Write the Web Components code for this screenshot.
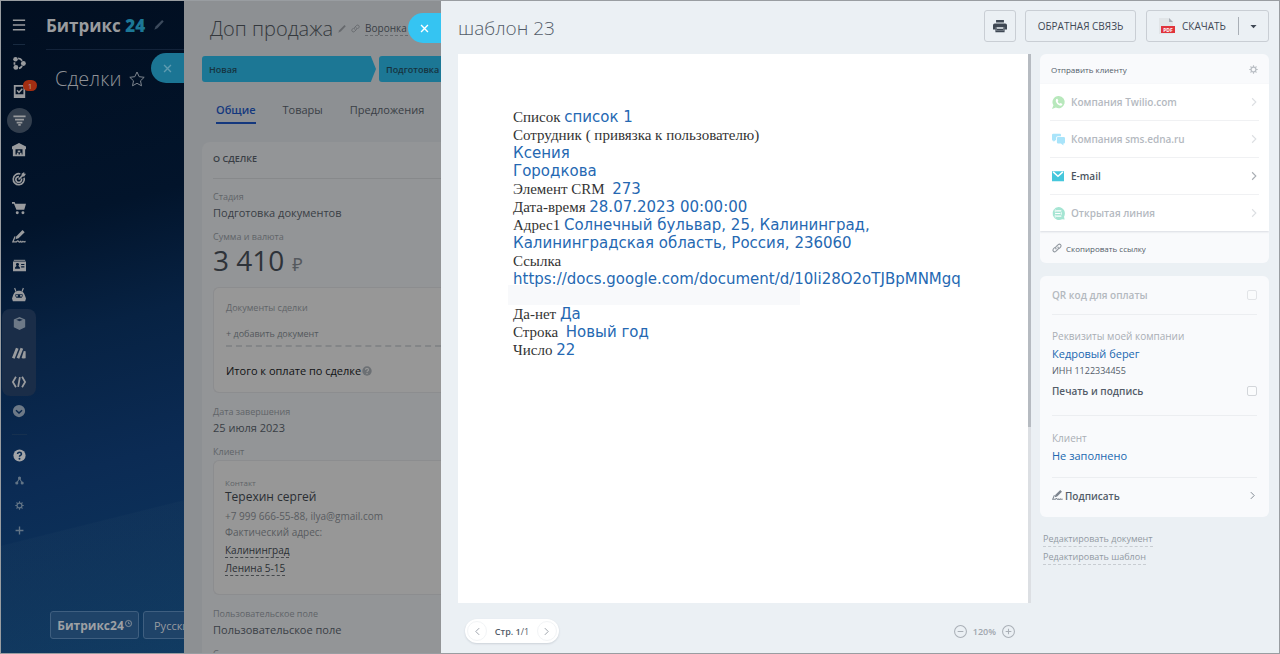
<!DOCTYPE html>
<html lang="ru">
<head>
<meta charset="utf-8">
<meta name="viewport" content="width=device-width, initial-scale=1">
<title>Битрикс 24 — шаблон 23</title>
<style>
  body { margin: 0; font-family: "Open Sans", "Noto Sans", sans-serif; font-size: 12px; color: #535c69; background: #ebf0f4; }
</style>
</head>
<body>
<app-frame>
  <portal-page slot="portal"></portal-page>
  <deal-panel slot="deal"></deal-panel>
  <document-viewer slot="viewer"></document-viewer>
</app-frame>

<script>
const RESET = `*,*::before,*::after{box-sizing:border-box}
button{font:inherit;color:inherit;background:none;border:0;padding:0;margin:0;cursor:pointer}
a{color:inherit;text-decoration:none}h1,h2,h3,p,dl,dd,ul{margin:0;padding:0;font-weight:400}ul{list-style:none}
input[type=checkbox]{appearance:none;margin:0;width:10px;height:10px;border:1px solid #d3d6da;border-radius:2px;background:#fbfcfd}`;

const define = (name, html) => {
  const template = document.createElement('template');
  template.innerHTML = html.replace('<style>', '<style>' + RESET);
  customElements.define(name, class extends HTMLElement {
    constructor() {
      super();
      this.attachShadow({ mode: 'open' }).append(template.content.cloneNode(true));
    }
  });
};

const ICONS = {
  burger: '<path d="M1 2.5h14M1 8h14M1 13.5h14" stroke="currentColor" stroke-width="1.6"/>',
  collab: '<circle cx="4" cy="3.6" r="2.6"/><circle cx="13" cy="8.5" r="2.8"/><circle cx="4.400" cy="13" r="2.800"/><path d="M7 2.800Q10 3 11.500 5.500M2.800 7v3M8 14q2 0 3.500-2.500" fill="none" stroke="currentColor" stroke-width="2"/>',
  task: '<path fill-rule="evenodd" d="M1 0h14v16H1zM3.200 2.200v9.300h9.600V2.200z"/><path d="M5 6.500l2.300 2.500L11.500 4.500" fill="none" stroke="currentColor" stroke-width="1.800"/>',
  funnel: '<path d="M.5 3h15M2.500 7h11M4.500 10.500h7M6.500 13.500h3" stroke="currentColor" stroke-width="2.200"/>',
  store: '<path fill-rule="evenodd" d="M8 0l8 4v3h-1v8H1V7H0V4zM4 7v6h1.500v-2h2v2H9v-2h2v2h1V7zM6.500 8.500h3v2h-3z"/>',
  target: '<path d="M13.800 6.500A6.300 6.300 0 1 1 9.500 2.200M10.800 7.500A3.300 3.300 0 1 1 8 5.300M7.500 8.600L14 2" fill="none" stroke="currentColor" stroke-width="1.900"/><path d="M11 4V2l3-2v2h2l-2 3h-2z"/>',
  cart: '<path d="M0 1h3l.8 2H16l-2 7H5L2.200 3H0z"/><circle cx="6" cy="13.500" r="1.700"/><circle cx="12.500" cy="13.500" r="1.700"/>',
  pen: '<path d="M12 0l2.500 2.500-7 7L4 10.500 5 7z"/><path d="M3.500 7.500L1 13.500H5q1.500-2 2.500-.5t2.500 0q1 1.500 2.500 0 1 1 3 0" fill="none" stroke="currentColor" stroke-width="1.500"/>',
  card: '<path d="M1 1h14v1.200H1z"/><path fill-rule="evenodd" d="M0 3.200h16V15H0zM5.500 5a1.700 1.700 0 0 0-1 3.200L2.500 10.500V12h6v-1.500L6.500 8.200A1.700 1.700 0 0 0 5.500 5zM10 6v1.500h4V6zm0 3v1.500h4V9z"/>',
  robot: '<path d="M3 0l1.500 4M13 0l-1.500 4" stroke="currentColor" stroke-width="1.300"/><path fill-rule="evenodd" d="M8 3c4 0 6 2.500 7 6l1 3-1 3H1l-1-3 1-3c1-3.500 3-6 7-6zM4 7q-1 3 1 4h6q2-1 1-4z"/><circle cx="5.700" cy="8.800" r="1.100"/><circle cx="10.300" cy="8.800" r="1.100"/>',
  cube: '<path fill-rule="evenodd" d="M8 0l7 3v9.500L8 16l-7-3.500V3zM4 3.500L8 5.300l4-1.800L8 2z"/>',
  make: '<path d="M1.500 14L6 2.500M6.800 14L11.300 2.500" stroke="currentColor" stroke-width="3.200"/><path d="M12 14l2.500-8V14" stroke="currentColor" stroke-width="2.200"/>',
  code: '<path d="M4.500 2L1 8l3.500 6M11.500 2L15 8l-3.500 6M9 2.500L7 13.500" fill="none" stroke="currentColor" stroke-width="2"/>',
  more: '<path fill-rule="evenodd" d="M8 1a7 7 0 1 0 0 14A7 7 0 0 0 8 1zM5 6.500l3 2.700 3-2.700 1 1.300-4 3.600-4-3.600z"/>',
  help: '<circle cx="8" cy="8" r="7.500"/><path d="M5.600 6.200Q5.700 3.900 8 3.900t2.400 2.100q0 1.200-1.300 1.900Q8 8.500 8 9.600" fill="none" stroke="var(--icon-hole,#0c2c52)" stroke-width="1.900"/><circle cx="8" cy="12" r="1.200" fill="var(--icon-hole,#0c2c52)"/>',
  sitemap: '<circle cx="8" cy="3.500" r="2.800"/><circle cx="3.200" cy="12.500" r="2.800"/><circle cx="12.800" cy="12.500" r="2.800"/><path d="M8 4L3.500 12M8 4l4.500 8" fill="none" stroke="currentColor" stroke-width="1.800"/>',
  gear: '<circle cx="8" cy="8" r="4.300" fill="none" stroke="currentColor" stroke-width="2.200"/><path d="M8 .5v3M8 12.500v3M.5 8h3M12.500 8h3M2.700 2.700l2 2M11.300 11.300l2 2M2.700 13.300l2-2M11.300 4.700l2-2" stroke="currentColor" stroke-width="2"/>',
  plus: '<path d="M8 1v14M1 8h14" stroke="currentColor" stroke-width="2.400"/>',
  pencil: '<path d="M13 0l2.500 2.500-10 10.500-5 2.500 2-5z"/>',
  star: '<path d="M8 1l2.200 4.700 5 .6-3.700 3.500 1 5L8 12.300l-4.500 2.500 1-5L.8 6.300l5-.6z" fill="none" stroke="currentColor"/>',
  close: '<path d="M3 3l10 10M13 3L3 13" stroke="currentColor" stroke-width="2"/>',
  link: '<path d="M7 10Q4.500 7.500 7 5.500l3-3q2-1.500 3.700.2t.2 3.700l-2.500 2.500M9 6q2.500 2.500 0 4.500l-3 3q-2 1.500-3.700-.2t-.2-3.700L4.600 7" fill="none" stroke="currentColor" stroke-width="1.700"/>',
  printer: '<path d="M3.500 1h9v3h-9zM2 5h12q2 0 2 2v5h-3V9.500H3V12H0V7q0-2 2-2zM4.500 11h7v2.500h-7z"/><path d="M3.500 9.500v5h9v-5" fill="none" stroke="currentColor" stroke-width="1.500"/>',
  caret: '<path d="M1 4.500h14L8 12z"/>',
  next: '<path d="M5 2l6 6-6 6" fill="none" stroke="currentColor" stroke-width="1.700"/>',
  prev: '<path d="M11 2L5 8l6 6" fill="none" stroke="currentColor" stroke-width="1.700"/>',
  minusCircle: '<circle cx="8" cy="8" r="7.300" fill="none" stroke="currentColor" stroke-width="1.300"/><path d="M4.500 8h7" stroke="currentColor" stroke-width="1.300"/>',
  plusCircle: '<circle cx="8" cy="8" r="7.300" fill="none" stroke="currentColor" stroke-width="1.300"/><path d="M4.500 8h7M8 4.500v7" stroke="currentColor" stroke-width="1.300"/>',
  clock: '<circle cx="8" cy="8" r="7" fill="none" stroke="currentColor" stroke-width="1.800"/><path d="M8 4v4.500h4" fill="none" stroke="currentColor" stroke-width="1.600"/>',
  whatsapp: '<path d="M8.500 0A7.500 7.500 0 1 1 4.800 14.200L0 16l1.800-4.500A7.500 7.500 0 0 1 8.500 0z"/><path d="M5.200 3.800l1.500-.3 1.100 2.400-.8 1.100q.8 1.700 2.600 2.500l1-.9 2.200 1.200-.3 1.400q-1.400 1.300-3.700.2-3-1.500-4-4.300-.5-2 .4-3.300z" fill="#fff"/>',
  chat: '<path d="M1.500 1H10q1 0 1 1v2H7Q5 4 5 6v3H4l-2 2V9.500H1.500Q0 9.500 0 8V2.500Q0 1 1.500 1z"/><path d="M7.500 5h7Q16 5 16 6.500v5q0 1.500-1.500 1.500H14v2.500L11 13H7.500Q6 13 6 11.500v-5Q6 5 7.500 5z"/>',
  mail: '<path d="M0 1.500h16V15H0z"/><path d="M1.500 2.500l6.500 6 6.500-6" fill="none" stroke="#fff" stroke-width="1.900"/>',
  openline: '<path d="M8 0a8 8 0 0 1 6.800 12l.7 3.500-3-.5A8 8 0 1 1 8 0z"/><path d="M5 4.800h6.500M3.800 8h6.500M5 11.200h6.500" stroke="#fff" stroke-width="1.500"/><path d="M4 3v3.500M11.500 6.500v3M4 9.500V13" stroke="#fff"/>',
  pdf: '<path d="M0 0h10l4 4v12H0z" fill="#e1e5e8"/><path d="M10 0l4 4h-4z" fill="#a8aeb5"/><path d="M2 8h14v7H2z" fill="#e0343c"/><text x="9" y="13.500" font-size="5" font-weight="700" font-family="Open Sans" text-anchor="middle" fill="#fff">PDF</text>'
};

customElements.define('ui-icon', class extends HTMLElement {
  constructor() { super(); this.attachShadow({ mode: 'open' }); }
  connectedCallback() {
    const size = this.getAttribute('size') || 14;
    this.shadowRoot.innerHTML = `<style>:host{display:inline-flex;flex:none}svg{display:block;overflow:visible}</style>
      <svg width="${size}" height="${size}" viewBox="0 0 16 16" fill="currentColor" aria-hidden="true">${ICONS[this.getAttribute('name')]}</svg>`;
  }
});

define('app-frame', `<style>
  :host{display:flex;height:100vh;box-sizing:border-box;border:1px solid #999da1;overflow:hidden}
  .portal{flex:0 0 183px;min-width:0;display:flex}
  .deal{flex:0 0 257px;min-width:0;display:flex;position:relative}
  .viewer{flex:1;min-width:0;display:flex;position:relative}
  ::slotted(*){flex:1;min-width:0}
  .tab{position:absolute;right:100%;width:33px;height:30px;border-radius:15px 0 0 15px;background:#35c4f2;color:#fff;display:flex;align-items:center;justify-content:center}
  .deal .tab{top:52px;background:#1b7594;color:#5e9bb0}
  .viewer .tab{top:12px}
  </style>
  <div class="portal"><slot name="portal"></slot></div>
  <div class="deal"><button class="tab" aria-label="Закрыть сделку"><ui-icon name="close" size="11"></ui-icon></button><slot name="deal"></slot></div>
  <div class="viewer"><button class="tab" aria-label="Закрыть документ"><ui-icon name="close" size="11"></ui-icon></button><slot name="viewer"></slot></div>`);

define('portal-rail', `<style>
  :host{display:flex;flex-direction:column;align-items:center;width:36px;color:#999b9e}
  button{height:29px;width:34px;flex:none;display:flex;align-items:center;justify-content:center;position:relative}
  .menu{height:43px;padding-top:5px}
  .sep{width:12px;height:4px;flex:none;border-top:1px solid #182a40}
  .active::before{content:"";position:absolute;inset:2px 5px 2px 5px;border-radius:50%;background:#323e4d;width:25px;height:25px}
  ui-icon{position:relative}
  .badge{position:absolute;left:21px;top:3px;width:14px;height:11px;border-radius:6px;background:#a32e12;color:#b8a49e;font-size:8px;line-height:11px;text-align:center}
  .group{background:#1a2d48;border-radius:8px;display:flex;flex-direction:column;color:#9a9c9f}
  .dim{color:#6d7987}
  .low{height:25px;color:#627486}
  .gap{margin-top:9px;width:15px;height:9px;flex:none;border-top:1px solid #16304f}
  .help{height:25px;color:#a3a5a8}
  </style>
  <button class="menu" aria-label="Меню"><ui-icon name="burger" size="14"></ui-icon></button>
  <div class="sep"></div>
  <button aria-label="Совместная работа"><ui-icon name="collab"></ui-icon></button>
  <button aria-label="Задачи"><ui-icon name="task" size="13"></ui-icon><span class="badge">1</span></button>
  <button class="active" aria-label="CRM"><ui-icon name="funnel" size="13"></ui-icon></button>
  <button aria-label="Склад"><ui-icon name="store"></ui-icon></button>
  <button aria-label="Маркетинг"><ui-icon name="target"></ui-icon></button>
  <button aria-label="Магазин"><ui-icon name="cart"></ui-icon></button>
  <button aria-label="Подпись"><ui-icon name="pen"></ui-icon></button>
  <button aria-label="Контакты"><ui-icon name="card" size="13"></ui-icon></button>
  <button aria-label="Роботы"><ui-icon name="robot"></ui-icon></button>
  <div class="group">
    <button class="dim" aria-label="Приложения"><ui-icon name="cube" size="13"></ui-icon></button>
    <button aria-label="Интеграции"><ui-icon name="make"></ui-icon></button>
    <button aria-label="Разработчикам"><ui-icon name="code"></ui-icon></button>
  </div>
  <button class="dim" aria-label="Ещё"><ui-icon name="more"></ui-icon></button>
  <div class="gap"></div>
  <button class="help" aria-label="Помощь"><ui-icon name="help" size="13"></ui-icon></button>
  <button class="low" aria-label="Структура"><ui-icon name="sitemap" size="9"></ui-icon></button>
  <button class="low" aria-label="Настройки"><ui-icon name="gear" size="9"></ui-icon></button>
  <button class="low" aria-label="Добавить"><ui-icon name="plus" size="9"></ui-icon></button>`);

define('portal-page', `<style>
  :host{display:flex;overflow:hidden;color:#999ca0;background:
    linear-gradient(166deg,transparent 78%,rgba(70,100,120,.07) 78.200%),
    linear-gradient(165deg,#010e20 0%,#02142b 33%,#072243 50%,#0b2b54 70%,#0d3860 100%)}
  .main{flex:1;min-width:0;display:flex;flex-direction:column;padding-left:9px}
  .brand{display:flex;align-items:center;gap:9px;height:49px;border-bottom:1px solid #13233a;color:#3c4a5c;white-space:nowrap}
  .brand a{font-size:17px;font-weight:700;color:#999b9e}
  .brand b{color:#1c7796}
  .title{display:flex;align-items:center;gap:8px;padding:14px 0 0 9px;color:#7e858e}
  h2{font-size:20px;line-height:30px;color:#8f9297;font-weight:300}
  .foot{margin-top:auto;margin-bottom:14px;padding-left:4px;display:flex;gap:4px}
  .foot button{flex:none;height:28px;padding:0 8px;width:89px;border:1px solid #3f5f80;border-radius:3px;background:#1f4368;font-size:11px;display:flex;align-items:center;justify-content:center;white-space:nowrap}
  .foot .lang{width:80px;justify-content:flex-start;padding-left:10px}
  .foot .logo{font-weight:700;font-size:12px;padding:0 4px;color:#9da0a4}
  .foot ui-icon{align-self:flex-start;margin:8px 0 0 1px}
  </style>
  <portal-rail></portal-rail>
  <div class="main">
    <div class="brand"><a href="#">Битрикс <b>24</b></a><ui-icon name="pencil" size="10"></ui-icon></div>
    <div class="title"><h2>Сделки</h2><ui-icon name="star" size="16"></ui-icon></div>
    <div class="foot">
      <button class="logo">Битрикс24<ui-icon name="clock" size="7"></ui-icon></button>
      <button class="lang">Русский</button>
    </div>
  </div>`);

define('deal-field', `<style>
  :host{display:block;white-space:nowrap;color:#393e45;font-size:11px;line-height:16px}
  .label{font-size:9px;line-height:16px;color:#606468}
  </style><div class="label"><slot name="label"></slot></div><div><slot></slot></div>`);

define('deal-panel', `<style>
  :host{display:flex;flex-direction:column;overflow:hidden;background:#8d9093;color:#393e45;white-space:nowrap;padding-left:18px}
  header{display:flex;align-items:center;gap:5px;height:55px;padding-left:8px;flex:none}
  h1{font-size:20px;font-weight:300;color:#34383d}
  header ui-icon{color:#66696d}
  header a{font-size:10px;font-weight:500;border-bottom:1px dashed #686b6f;line-height:14px}
  .steps{display:flex;gap:3px;height:26px;flex:none;font-size:9px;font-weight:600;color:#16333f}
  .steps button{flex:0 0 174px;text-align:left;padding-left:7px;background:#1c7795;clip-path:polygon(0 0,97% 0,100% 50%,97% 100%,0 100%);border-radius:3px}
  nav{display:flex;gap:27px;padding:19px 0 0 14px;height:60px;flex:none;font-size:11px;font-weight:500}
  nav a{height:23px;line-height:18px}
  nav .on{color:#14387e;border-bottom:2px solid #14387e;font-weight:600}
  .card{flex:none;background:#939597;border-radius:8px 0 0 0;padding:0 0 0 11px;display:flex;flex-direction:column}
  h3{height:37px;line-height:34px;font-size:9px;font-weight:600;border-bottom:1px solid #87898b;margin-bottom:10px}
  .sum{font-size:28px;line-height:30px;color:#2e3339;display:flex;align-items:baseline;gap:8px}
  .sum small{font-size:18px;color:#55595e}
  .box{background:#979797;border:1px solid #8c8d8f;border-right:0;border-radius:6px 0 0 6px;padding-left:12px}
  .sumfield{margin-top:8px}
  .docs{height:106px;margin:8px 0 11px;padding-top:12px;font-size:9px;line-height:16px;color:#606468}
  .docs button{display:block;width:100%;text-align:left;height:25px;margin-top:6px;border-bottom:2px dashed #838587;line-height:20px;color:#53575c}
  .docs .total{display:flex;align-items:center;gap:1px;font-size:11px;line-height:16px;margin-top:16px;color:#101214;--icon-hole:#979797}
  .total ui-icon{color:#6c7074}
  .client{margin-top:8px;font-size:9px;line-height:16px;color:#606468}
  .contact{height:135px;padding:16px 0 0 11px;margin-bottom:11px;line-height:16px;font-size:10px;color:#575b60}
  .contact .tiny{font-size:8px;line-height:12px;color:#606468}
  .contact .name{font-size:12px;color:#2a2e33;margin-bottom:3px}
  .contact a{display:table;color:#2a2e33;border-bottom:1px dashed #44484c;line-height:14px;margin-top:3px}
  </style>
  <header><h1>Доп продажа</h1><ui-icon name="pencil" size="8"></ui-icon><ui-icon name="link" size="9"></ui-icon><a href="#">Воронка отдела</a></header>
  <div class="steps"><button>Новая</button><button>Подготовка документов</button></div>
  <nav><a class="on" href="#">Общие</a><a href="#">Товары</a><a href="#">Предложения</a></nav>
  <section class="card">
    <h3>О СДЕЛКЕ</h3>
    <deal-field><span slot="label">Стадия</span>Подготовка документов</deal-field>
    <deal-field class="sumfield"><span slot="label">Сумма и валюта</span><div class="sum">3 410 <small>₽</small></div></deal-field>
    <div class="box docs"><p>Документы сделки</p><button>+ добавить документ</button><div class="total">Итого к оплате по сделке<ui-icon name="help" size="10"></ui-icon></div></div>
    <deal-field><span slot="label">Дата завершения</span>25 июля 2023</deal-field>
    <p class="client">Клиент</p>
    <div class="box contact">
      <p class="tiny">Контакт</p><p class="name">Терехин сергей</p>
      <p>+7 999 666-55-88, ilya@gmail.com</p><p>Фактический адрес:</p>
      <a href="#">Калининград</a><a href="#">Ленина 5-15</a>
    </div>
    <deal-field><span slot="label">Пользовательское поле</span>Пользовательское поле</deal-field>
    <deal-field class="sumfield"><span slot="label">С</span></deal-field>
  </section>`);

define('document-page', `<style>
  :host{display:block;overflow:hidden;background:#fff;padding:54px 20px 20px 55px;font-family:"Liberation Serif",serif;font-size:15px;line-height:18px;color:#333;white-space:nowrap}
  p{height:18px}
  b{font-family:"DejaVu Sans",sans-serif;font-weight:400;font-size:15px;line-height:0;color:#2568b2}
  .strip{width:292px;height:20px;margin:-3px 0 0 -5px;background:#f8f9fb}
  </style>
  <p>Список <b>список 1</b></p>
  <p>Сотрудник ( привязка к пользователю)</p>
  <p><b>Ксения</b></p>
  <p><b>Городкова</b></p>
  <p>Элемент CRM &nbsp;<b>273</b></p>
  <p>Дата-время <b>28.07.2023 00:00:00</b></p>
  <p>Адрес1 <b>Солнечный бульвар, 25, Калининград,</b></p>
  <p><b>Калининградская область, Россия, 236060</b></p>
  <p>Ссылка</p>
  <p><b>https://docs.google.com/document/d/10li28O2oTJBpMNMgq</b></p>
  <div class="strip"></div>
  <p>Да-нет <b>Да</b></p>
  <p>Строка &nbsp;<b>Новый год</b></p>
  <p>Число <b>22</b></p>`);

define('send-option', `<style>
  :host{display:block;border-bottom:1px solid #f0f1f3;margin:0 10px}
  :host(:last-of-type){border-bottom:0}
  button{width:100%;height:36px;display:flex;align-items:center;gap:6px;font-size:10px;font-weight:600;color:#4b5460;text-align:left;padding:0 0 0 2px}
  .go{margin-left:auto;color:#a8adb3;display:flex}
  :host([off]) button{color:#b4b9bf}
  :host([off]) .go{color:#dcdfe2}
  ::slotted(ui-icon){width:13px}
  </style><button><slot name="icon"></slot><slot></slot><span class="go"><ui-icon name="next" size="10"></ui-icon></span></button>`);

define('send-card', `<style>
  :host{display:block;border-radius:6px;background:#f9fafc;overflow:hidden}
  header{height:30px;display:flex;align-items:center;justify-content:space-between;padding:0 11px;color:#535c69}
  h2{font-size:8px}
  header button{display:flex;color:#b9bec4}
  .list{background:#fff;box-shadow:0 1px 2px rgba(80,90,110,.18)}
  .copy{height:32px;width:100%;display:flex;align-items:center;gap:4px;padding:2px 12px 0;font-size:8px;color:#535c69}
  .copy ui-icon{color:#8f969e}
  </style>
  <header><h2>Отправить клиенту</h2><button aria-label="Настройки отправки"><ui-icon name="gear" size="9"></ui-icon></button></header>
  <div class="list">
    <send-option off><ui-icon slot="icon" name="whatsapp" size="13" style="color:#b8e8bc"></ui-icon>Компания Twilio.com</send-option>
    <send-option off><ui-icon slot="icon" name="chat" size="13" style="color:#a9e4fa"></ui-icon>Компания sms.edna.ru</send-option>
    <send-option><ui-icon slot="icon" name="mail" size="12" style="color:#45c7dc"></ui-icon>E-mail</send-option>
    <send-option off><ui-icon slot="icon" name="openline" size="13" style="color:#a5e5d3"></ui-icon>Открытая линия</send-option>
  </div>
  <button class="copy"><ui-icon name="link" size="10"></ui-icon>Скопировать ссылку</button>`);

define('options-card', `<style>
  :host{display:block;border-radius:6px;background:#f9fafc;padding:0 12px;font-size:10px;line-height:18px}
  .row{display:flex;align-items:center;justify-content:space-between;width:100%;font-weight:600;color:#535c69}
  .off{color:#b4b9bf;height:38px}
  .off input{opacity:.6}
  section{border-top:1px solid #eceef1}
  .req{padding-top:12px;height:101px}
  .cl{padding-top:13px;height:62px}
  .label{color:#a9aeb5}
  a{display:block;color:#2067b0;font-size:11px}
  .inn{font-size:9px;line-height:16px}
  .req .row{margin-top:3px}
  .row .t{display:flex;align-items:center;gap:2px}
  .sign{height:35px}
  .sign ui-icon{color:#7d858f}
  section:last-child{padding-bottom:4px}
  </style>
  <label class="row off">QR код для оплаты<input type="checkbox"></label>
  <section class="req"><p class="label">Реквизиты моей компании</p><a href="#">Кедровый берег</a><p class="inn">ИНН 1122334455</p>
    <label class="row">Печать и подпись<input type="checkbox"></label></section>
  <section class="cl"><p class="label">Клиент</p><a href="#">Не заполнено</a></section>
  <section><button class="row sign"><span class="t"><ui-icon name="pen" size="11"></ui-icon>Подписать</span><ui-icon name="next" size="9"></ui-icon></button></section>`);

define('document-viewer', `<style>
  :host{display:flex;flex-direction:column;background:#ebf0f4;padding:0 10px 0 17px}
  header{display:flex;align-items:center;height:53px;flex:none}
  h1{font-size:19px;line-height:26px;color:#535c69;font-weight:300;margin-right:auto}
  .btn{height:32px;margin-bottom:3px;border:1px solid #c9ced4;border-radius:3px;display:flex;align-items:center;justify-content:center;font-size:10px;font-weight:500;color:#3f4854}
  .print{width:32px;margin-right:9px}
  .feed{width:111px;margin-right:10px}
  .down{width:123px}
  .down button{height:100%;display:flex;align-items:center}
  .down .get{flex:1;padding-left:12px;gap:7px}
  .down .caret{width:30px;justify-content:center;height:18px;border-left:1px solid #a9afb6}
  .body{flex:1;min-height:0;display:flex;gap:9px}
  .doc{flex:1;min-width:0;display:flex;flex-direction:column}
  .sheet{flex:1;min-height:0;display:flex}
  document-page{flex:1;min-width:0}
  .bar{width:3px;background:#dcdfe3}
  .bar div{height:68%;background:#b6bbc1}
  footer{height:50px;flex:none;display:flex;align-items:center;justify-content:space-between;padding:6px 16px 0 7px}
  .pager,.zoom{display:flex;align-items:center;font-size:9px;font-weight:600}
  .pager{width:94px;height:24px;border-radius:12px;background:#fff;box-shadow:0 1px 2px rgba(80,90,110,.2);justify-content:space-between;padding:0 2px}
  .pager button{width:20px;height:20px;border-radius:50%;border:1px solid #f2f4f6;display:flex;align-items:center;justify-content:center;color:#9aa1a9}
  .pager span span{font-weight:400}
  .zoom{gap:6px;color:#a0a6ae}
  .zoom button{display:flex;color:#aab0b7}
  aside{width:229px;flex:none;display:flex;flex-direction:column;gap:13px}
  .links{font-size:9px;color:#929aa3;padding:2px 3px 0;line-height:14px;display:flex;flex-direction:column;align-items:flex-start;gap:3px}
  .links a{border-bottom:1px dashed #c8cdd2}
  </style>
  <header>
    <h1>шаблон 23</h1>
    <button class="btn print" aria-label="Печать"><ui-icon name="printer" size="14"></ui-icon></button>
    <button class="btn feed">ОБРАТНАЯ СВЯЗЬ</button>
    <div class="btn down"><button class="get"><ui-icon name="pdf" size="16"></ui-icon>СКАЧАТЬ</button><button class="caret" aria-label="Другие форматы"><ui-icon name="caret" size="7"></ui-icon></button></div>
  </header>
  <div class="body">
    <div class="doc">
      <div class="sheet"><document-page></document-page><div class="bar"><div></div></div></div>
      <footer>
        <div class="pager"><button aria-label="Назад"><ui-icon name="prev" size="9"></ui-icon></button><span>Стр. 1<span>/1</span></span><button aria-label="Вперёд"><ui-icon name="next" size="9"></ui-icon></button></div>
        <div class="zoom"><button aria-label="Уменьшить"><ui-icon name="minusCircle" size="13"></ui-icon></button>120%<button aria-label="Увеличить"><ui-icon name="plusCircle" size="13"></ui-icon></button></div>
      </footer>
    </div>
    <aside>
      <send-card></send-card>
      <options-card></options-card>
      <div class="links"><a href="#">Редактировать документ</a><a href="#">Редактировать шаблон</a></div>
    </aside>
  </div>`);
</script>
</body>
</html>
